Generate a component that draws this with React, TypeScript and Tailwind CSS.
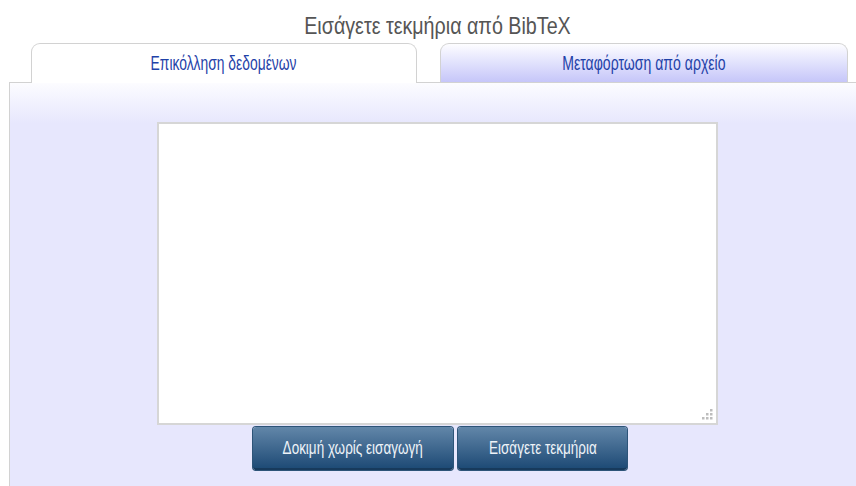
import React from "react";

function Grip() {
  // small dotted resize grip in the textarea corner
  const dots = [
    [8, 0],
    [4, 4],
    [8, 4],
    [0, 8],
    [4, 8],
    [8, 8],
  ];
  return (
    <svg className="absolute right-[3px] bottom-[3px]" width="11" height="11" viewBox="0 0 11 11">
      {dots.map(([x, y], i) => (
        <rect key={i} x={x} y={y} width="2.5" height="2.5" fill="#bdbdbd" />
      ))}
    </svg>
  );
}

export default function App() {
  return (
    <div
      className="w-[856px] h-[486px] bg-white overflow-hidden flex flex-col"
      style={{ fontFamily: '"Liberation Sans", Arial, sans-serif' }}
    >
      <div className="h-[43px] flex items-center justify-center pt-[8px] pl-[18px]">
        <span className="inline-block text-[24px] leading-none text-[#555555] scale-x-[0.82]">
          Εισάγετε τεκμήρια από BibTeX
        </span>
      </div>

      <div className="flex pl-[31px] gap-[23px] h-[39px] relative z-10">
        <div className="w-[386px] h-[40px] bg-white border border-b-0 border-[#d2d2d2] rounded-t-[9px] flex items-center justify-center">
          <span className="inline-block text-[21px] leading-none text-[#1f42a8] scale-x-[0.66] pb-[2px]">
            Επικόλληση δεδομένων
          </span>
        </div>
        <div className="w-[408px] h-[39px] bg-gradient-to-b from-[#fdfdff] to-[#c6c6f9] border border-b-0 border-[#d2d2d2] rounded-t-[9px] flex items-center justify-center">
          <span className="inline-block text-[21px] leading-none text-[#1f42a8] scale-x-[0.67] pb-[2px]">
            Μεταφόρτωση από αρχείο
          </span>
        </div>
      </div>

      <div className="flex-1 ml-[9px] border-l border-t border-[#d2d2d2] bg-[#e7e7fd] bg-gradient-to-b from-[#fcfcff] to-[#e7e7fd] bg-[length:100%_40px] bg-no-repeat flex flex-col pt-[39px] pl-[147px]">
        <div className="relative w-[561px] h-[303px] bg-white border-2 border-[#d6d6d6]">
          <Grip />
        </div>
        <div className="flex gap-[5px] mt-[2px] ml-[96px]">
          <button className="w-[200px] h-[43px] rounded-[3px] bg-gradient-to-b from-[#6287a9] to-[#1e4b76] border-b-2 border-[#173a5c] shadow-[0_0_0_1px_#2d5478] flex items-center justify-center">
            <span className="inline-block text-[19px] leading-none text-[#eef3f8] scale-x-[0.71]">
              Δοκιμή χωρίς εισαγωγή
            </span>
          </button>
          <button className="w-[169px] h-[43px] rounded-[3px] bg-gradient-to-b from-[#6287a9] to-[#1e4b76] border-b-2 border-[#173a5c] shadow-[0_0_0_1px_#2d5478] flex items-center justify-center">
            <span className="inline-block text-[19px] leading-none text-[#eef3f8] scale-x-[0.71]">
              Εισάγετε τεκμήρια
            </span>
          </button>
        </div>
      </div>
    </div>
  );
}
